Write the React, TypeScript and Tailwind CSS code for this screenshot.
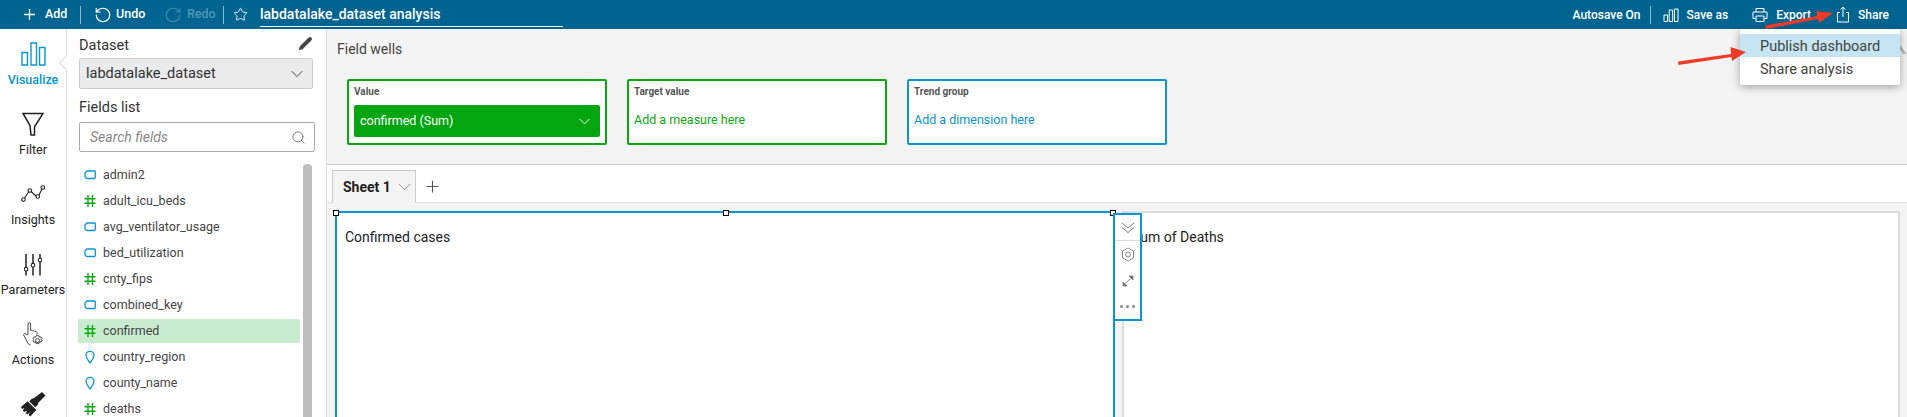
import { ReactNode } from 'react'
import { ChevronDown, Search, Pencil, Star, Plus, RotateCcw, RotateCw } from 'lucide-react'

type FieldType = 'text' | 'num' | 'geo'

const FIELDS: { name: string; type: FieldType; active?: boolean }[] = [
  { name: 'admin2', type: 'text' },
  { name: 'adult_icu_beds', type: 'num' },
  { name: 'avg_ventilator_usage', type: 'text' },
  { name: 'bed_utilization', type: 'text' },
  { name: 'cnty_fips', type: 'num' },
  { name: 'combined_key', type: 'text' },
  { name: 'confirmed', type: 'num', active: true },
  { name: 'country_region', type: 'geo' },
  { name: 'county_name', type: 'geo' },
  { name: 'deaths', type: 'num' },
]

function FieldIcon({ type }: { type: FieldType }) {
  if (type === 'num') {
    return (
      <svg width="12" height="14" viewBox="0 0 12 14" fill="none" stroke="#0aa80f" strokeWidth="1.4">
        <path d="M4 1v12M8.500 1v12M0.500 4.700h11M0.500 9.300h11" />
      </svg>
    )
  }
  if (type === 'geo') {
    return (
      <svg width="12" height="14" viewBox="0 0 12 14" fill="none" stroke="#0a94d0" strokeWidth="1.3">
        <path d="M6 13C4 10 2 8 2 5.300a4 4 0 0 1 8 0C10 8 8 10 6 13z" />
      </svg>
    )
  }
  return (
    <svg width="12" height="14" viewBox="0 0 12 14" fill="none" stroke="#0a94d0" strokeWidth="1.3">
      <path d="M3 3h7.500a1 1 0 0 1 .8 1v5.500a1 1 0 0 1-.8 1H3.500A2.500 2.500 0 0 1 1 8V5z" />
    </svg>
  )
}

function RailItem({ icon, label, active }: { icon: ReactNode; label?: string; active?: boolean }) {
  return (
    <div className="h-[70px] flex flex-col items-center">
      <div className="h-[28px] flex items-center justify-center">{icon}</div>
      {label && (
        <div className={`h-[24px] leading-[24px] text-[12.5px] whitespace-nowrap ${active ? 'text-[#0a94d0] font-medium' : 'text-[#222]'}`}>
          {label}
        </div>
      )}
    </div>
  )
}

function Well({ label, color, children }: { label: string; color: string; children: ReactNode }) {
  return (
    <div className={`w-[260px] h-[66px] bg-white border-2 rounded-[2px] px-[5px] ${color}`}>
      <div className="h-[24px] pt-[3px] text-[10px] leading-[16px] font-bold text-[#555]">{label}</div>
      {children}
    </div>
  )
}

function HeaderDivider() {
  return <div className="w-px h-[18px] bg-[#8fb7c9]" />
}

export default function App() {
  return (
    <div className="relative w-[1907px] h-[417px] overflow-hidden bg-white font-['Roboto',sans-serif]">
      {/* Header */}
      <div className="h-[29px] bg-[#006491] text-white flex items-center justify-between text-[12px]">
        <div className="flex items-center text-[12.5px]">
          <Plus className="ml-[21px] w-[17px] h-[17px]" strokeWidth={1.8} />
          <span className="ml-[7px] w-[28px] font-medium">Add</span>
          <div className="ml-[7px]"><HeaderDivider /></div>
          <RotateCcw className="ml-[13px] w-[18px] h-[18px]" strokeWidth={1.6} />
          <span className="ml-[4px] w-[29px] font-medium">Undo</span>
          <RotateCw className="ml-[19px] w-[18px] h-[18px] text-[#3c8bad]" strokeWidth={1.6} />
          <span className="ml-[5px] w-[26px] font-medium text-[#4f97b6]">Redo</span>
          <div className="ml-[10px]"><HeaderDivider /></div>
          <Star className="ml-[9px] w-[15px] h-[15px]" strokeWidth={1.4} />
          <div className="ml-[12px] w-[303px] h-[24px] mt-[1px] border-b border-white text-[14px] leading-[22px] font-medium whitespace-nowrap">
            labdatalake_dataset analysis
          </div>
        </div>
        <div className="flex items-center pr-[18px]">
          <span className="font-medium">Autosave On</span>
          <div className="ml-[9px]"><HeaderDivider /></div>
          <svg className="ml-[12px]" width="16" height="16" viewBox="0 0 16 16" fill="none" stroke="white" strokeWidth="1">
            <path d="M1 8h3.500v6.500H1zM6.200 3h3.500v11.500H6.200zM11.500 2h3.500v12.500h-3.500z" />
          </svg>
          <span className="ml-[8px] font-medium">Save as</span>
          <svg className="ml-[24px]" width="16" height="16" viewBox="0 0 16 16" fill="none" stroke="white" strokeWidth="1">
            <path d="M4 5V1.500h8V5M4 11.500H1V5h14v6.500h-3M4 9h8v5.500H4z" />
          </svg>
          <span className="ml-[8px] font-medium">Export</span>
          <svg className="ml-[25px]" width="14" height="17" viewBox="0 0 14 17" fill="none" stroke="white" strokeWidth="1">
            <path d="M4 6.500H1.500v9.500h11V6.500H10M7 11V1M4.500 3.500L7 1l2.500 2.500" />
          </svg>
          <span className="ml-[8px] font-medium">Share</span>
        </div>
      </div>

      <div className="flex h-[388px]">
        {/* Left rail */}
        <div className="relative w-[67px] shrink-0 border-r border-[#ddd] pt-[11px]">
          <RailItem
            active
            label="Visualize"
            icon={
              <svg width="25" height="24" viewBox="0 0 25 24" fill="none" stroke="#0a94d0" strokeWidth="1.4">
                <path d="M1 10.500h5.500V23H1zM10 1h5.500v22H10zM18.500 5.500H24V23h-5.500z" />
              </svg>
            }
          />
          <RailItem
            label="Filter"
            icon={
              <svg width="22" height="25" viewBox="0 0 22 25" fill="none" stroke="#222" strokeWidth="1.5">
                <path d="M1 1.500h20L14 12.500l-1 1 -.5 2v7.500L9 23l-1-9.500z" />
              </svg>
            }
          />
          <RailItem
            label="Insights"
            icon={
              <svg width="24" height="18" viewBox="0 0 24 18" fill="none" stroke="#222" strokeWidth="1.1">
                <path d="M3.500 13l4.500-6.500M10 6.500l5 4.500M18 10l3-6" />
                <circle cx="2.500" cy="14.500" r="1.800" />
                <circle cx="8.800" cy="5.500" r="1.800" />
                <circle cx="16.800" cy="11.500" r="1.800" />
                <circle cx="21.800" cy="2.500" r="1.800" />
              </svg>
            }
          />
          <RailItem
            label="Parameters"
            icon={
              <svg width="18" height="23" viewBox="0 0 18 23" fill="none" stroke="#222" strokeWidth="1.5">
                <path d="M2 1v13.500M2 18v4.500M9 1v9.500M9 14v8.500M16 1v4M16 9v13.500" />
                <circle cx="2" cy="16.200" r="1.800" strokeWidth="1.1" />
                <circle cx="9" cy="12.200" r="1.800" strokeWidth="1.1" />
                <circle cx="16" cy="7" r="1.800" strokeWidth="1.1" />
              </svg>
            }
          />
          <RailItem
            label="Actions"
            icon={
              <svg width="22" height="25" viewBox="0 0 22 25" fill="none" stroke="#333" strokeWidth="0.9">
                <path d="M6 12V2a1.300 1.300 0 0 1 2.600 0v6.500l1-.3 1 .6 1.200-.2 1 .8 1.300 0 1 1.300v1.800M6 12l-1.200 1-1-1.200c-1.200-.8-2.700.2-2 1.500L6 21.500l2.500 1.500" />
                <circle cx="15.500" cy="18.500" r="2" />
                <path d="M15.500 13.500l1.500.4.500 1.300 1.500-.2 1 1.300-.7 1.200.7 1.300-.8 1.300-1.500 0-.7 1.300-1.500.3-1.500-.3-.7-1.300-1.500 0-.8-1.300.7-1.300-.7-1.200 1-1.300 1.500.2.500-1.300z" />
              </svg>
            }
          />
          <RailItem
            icon={
              <svg width="25" height="25" viewBox="0 0 25 25" fill="#222">
                <path d="M21 0l3.500 3.500-7.200 7.200-.5 2-2.600 2.600-6-6 2.600-2.600 2-.5z" />
                <path d="M6.500 9.200l8.800 8.800-6 6.500-1.700-1.500 1.200-2.500-2.700 2-1.400-1.200 1.400-2.800-2.800 1.500-1.500-1.400 1.800-2.600-2.600 1L0 15z" />
              </svg>
            }
          />
          {/* notch pointing at the active tab */}
          <div className="absolute left-[61px] top-[29px] w-[10px] h-[10px] bg-white rotate-45 border-l border-b border-[#ddd]" />
        </div>

        {/* Dataset + fields panel */}
        <div className="relative w-[260px] shrink-0 border-r border-[#ddd] flex flex-col">
          <div className="pl-[12px] pr-[13px]">
            <div className="h-[29px] flex items-center justify-between">
              <span className="text-[14.5px] text-[#333] pt-[4px]">Dataset</span>
              <Pencil className="w-[15px] h-[15px] text-[#444] fill-[#444]" strokeWidth={1} />
            </div>
            <div className="h-[31px] w-[234px] bg-[#ebebeb] border border-[#ccc] rounded-[2px] flex items-center justify-between pl-[6px] pr-[5px]">
              <span className="text-[14.5px] text-[#333]">labdatalake_dataset</span>
              <ChevronDown className="w-[20px] h-[20px] text-[#444]" strokeWidth={1.2} />
            </div>
            <div className="h-[33px] leading-[38px] text-[14.5px] text-[#333]">Fields list</div>
            <div className="h-[30px] w-[236px] border border-[#aaa] rounded-[2px] flex items-center justify-between pl-[10px] pr-[8px]">
              <span className="text-[14px] italic text-[#888] pt-[1px]">Search fields</span>
              <Search className="w-[15px] h-[15px] text-[#555]" strokeWidth={1.2} />
            </div>
          </div>
          <div className="flex pt-[11px] pl-[11px]">
            <div className="w-[222px]">
              {FIELDS.map(field => (
                <div
                  key={field.name}
                  className={`h-[24px] mb-[2px] rounded-[2px] flex items-center pl-[6px] gap-[7px] ${field.active ? 'bg-[#c9ecd0]' : ''}`}
                >
                  <FieldIcon type={field.type} />
                  <span className="text-[12.5px] text-[#444]">{field.name}</span>
                </div>
              ))}
            </div>
            <div className="ml-[3px] w-[9px] mt-[1px] h-[300px] rounded-t-[4px] bg-[#bdbdbd]" />
          </div>
        </div>

        {/* Main column */}
        <div className="relative flex-1 flex flex-col min-w-0">
          <div className="h-[136px] bg-[#f4f4f4] border-b border-[#ccc] shrink-0">
            <div className="pl-[10px] h-[50px] pt-[10px] text-[14px] leading-[20px] text-[#444]">Field wells</div>
            <div className="pl-[20px] flex gap-[20px]">
              <Well label="Value" color="border-[#0aa80f]">
                <div className="w-[246px] h-[32px] bg-[#03a60f] rounded-[2px] flex items-center justify-between pl-[6px] pr-[6px]">
                  <span className="text-[12.5px] text-white">confirmed (Sum)</span>
                  <ChevronDown className="w-[19px] h-[19px] text-white" strokeWidth={1.2} />
                </div>
              </Well>
              <Well label="Target value" color="border-[#0aa80f]">
                <div className="pt-[6px] text-[12.5px] text-[#0aa80f]">Add a measure here</div>
              </Well>
              <Well label="Trend group" color="border-[#0a94d0]">
                <div className="pt-[6px] text-[12.5px] text-[#0a94d0]">Add a dimension here</div>
              </Well>
            </div>
          </div>

          {/* Sheet tabs */}
          <div className="h-[38px] shrink-0 border-b border-[#ddd] flex items-end pl-[5px]">
            <div className="h-[33px] w-[84px] -mb-px bg-[#f4f4f4] border border-b-0 border-[#ccc] flex items-center pl-[10px]">
              <span className="text-[14px] font-bold text-[#222] whitespace-nowrap">Sheet 1</span>
              <ChevronDown className="ml-[3px] w-[22px] h-[22px] text-[#888]" strokeWidth={1} />
            </div>
            <Plus className="ml-[7px] mb-[6px] w-[19px] h-[19px] text-[#555]" strokeWidth={1.4} />
          </div>

          {/* Canvas */}
          <div className="flex-1 bg-[#f4f4f4] flex pl-[8px] pr-[7px] pt-[8px] gap-[7px] min-h-0">
            <div className="w-[780px] shrink-0 h-[260px] bg-white border-2 border-b-0 border-[#0a94d0] pl-[8px] pt-[14px] text-[14px] leading-[20px] text-[#222]">
              Confirmed cases
            </div>
            <div className="flex-1 h-[260px] bg-white border-2 border-b-0 border-[#ddd] pl-[8px] pt-[14px] text-[14px] leading-[20px] text-[#222]">
              Sum of Deaths
            </div>
          </div>

          {/* Resize handles on the selected visual */}
          <div className="absolute left-[6px] top-[181px] w-[6px] h-[6px] bg-white border border-black" />
          <div className="absolute left-[396px] top-[181px] w-[6px] h-[6px] bg-white border border-black" />
          <div className="absolute left-[783px] top-[181px] w-[6px] h-[6px] bg-white border border-black" />

          {/* Visual toolbar */}
          <div className="absolute left-[786px] top-[184px] w-[29px] h-[108px] bg-white border-2 border-[#0a94d0] flex flex-col items-center">
            <div className="h-[26px] w-full border-b border-[#ddd] flex items-center justify-center">
              <svg width="14" height="12" viewBox="0 0 14 12" fill="none" stroke="#777" strokeWidth="1">
                <path d="M1 1l6 5 6-5M1 5.500l6 5 6-5" />
              </svg>
            </div>
            <div className="h-[27px] flex items-center justify-center">
              <svg width="14" height="15" viewBox="0 0 14 15" fill="none" stroke="#888" strokeWidth="1">
                <path d="M7 1l5.500 3.200v6.600L7 14l-5.500-3.200V4.200z" />
                <circle cx="7" cy="7.500" r="2.500" />
              </svg>
            </div>
            <div className="h-[25px] flex items-center justify-center">
              <svg width="12" height="12" viewBox="0 0 12 12" fill="#777" stroke="#777" strokeWidth="0.8">
                <path d="M7 1h4v4zM1 11V7l4 4z" />
                <path d="M8.500 3.500L3.500 8.500" />
              </svg>
            </div>
            <div className="h-[26px] flex items-center justify-center gap-[3px]">
              <div className="w-[3px] h-[3px] rounded-full bg-[#888]" />
              <div className="w-[3px] h-[3px] rounded-full bg-[#888]" />
              <div className="w-[3px] h-[3px] rounded-full bg-[#888]" />
            </div>
          </div>

          {/* Collapse handle, peeking out from under the menu */}
          <svg className="absolute right-0 top-[16px]" width="7" height="11" viewBox="0 0 7 11" fill="none" stroke="#888" strokeWidth="0.9">
            <path d="M0 1l6 8M0 3l4 6" />
          </svg>
        </div>
      </div>

      {/* Share menu */}
      <div className="absolute left-[1740px] top-[29px] w-[160px] h-[56px] bg-white rounded-b-[2px] shadow-[0_2px_8px_rgba(0,0,0,0.35)] pt-[5px] text-[14.5px] text-[#444]">
        <div className="h-[23px] leading-[25px] pl-[20px] bg-[#c5e5f2] whitespace-nowrap">Publish dashboard</div>
        <div className="h-[23px] leading-[25px] pl-[20px] whitespace-nowrap">Share analysis</div>
      </div>

      {/* Red annotation arrows */}
      <svg className="absolute left-[1760px] top-[6px]" width="76" height="26" viewBox="0 0 76 26" fill="#ee3b26">
        <path d="M5 19.500L57 10l-.5-5L73 7 59 17l-1-4L6 23z" />
      </svg>
      <svg className="absolute left-[1675px] top-[44px]" width="74" height="24" viewBox="0 0 74 24" fill="#ee3b26">
        <path d="M3 17.500L56 10l-.5-7L71 8 57 17l-.5-4L3.500 21z" />
      </svg>
    </div>
  )
}
